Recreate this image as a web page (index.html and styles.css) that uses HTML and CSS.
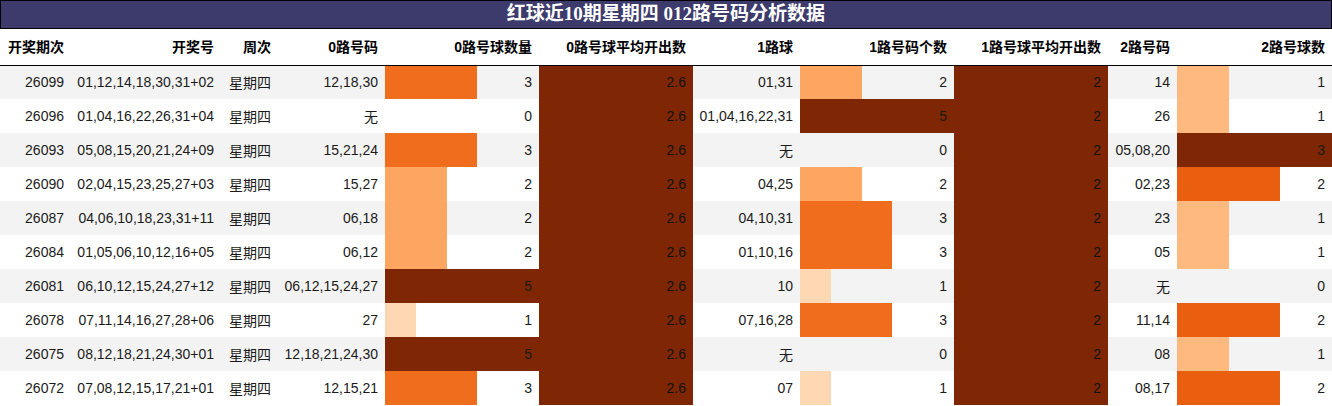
FILE: index.html
```html
<!DOCTYPE html>
<html lang="zh-CN">
<head>
<meta charset="utf-8">
<title>红球近10期星期四 012路号码分析数据</title>
<link rel="stylesheet" href="styles.css">
</head>
<body>
<div class="sheet">
  <div class="title">红球近10期星期四 012路号码分析数据</div>
  <table class="grid">
    <colgroup>
      <col class="c1"><col class="c2"><col class="c3"><col class="c4"><col class="c5"><col class="c6"><col class="c7"><col class="c8"><col class="c9"><col class="c10"><col class="c11">
    </colgroup>
    <thead>
      <tr>
        <th>开奖期次</th><th>开奖号</th><th>周次</th><th>0路号码</th><th>0路号球数量</th><th>0路号球平均开出数</th><th>1路球</th><th>1路号码个数</th><th>1路号球平均开出数</th><th>2路号码</th><th>2路号球数</th>
      </tr>
    </thead>
    <tbody>
      <tr>
        <td>26099</td><td>01,12,14,18,30,31+02</td><td>星期四</td><td>12,18,30</td>
        <td class="bar" style="--w:60%;--c:#f16d1e">3</td><td class="full">2.6</td>
        <td>01,31</td><td class="bar" style="--w:40%;--c:#fda662">2</td><td class="full">2</td>
        <td>14</td><td class="bar" style="--w:33.33%;--c:#fdb97e">1</td>
      </tr>
      <tr>
        <td>26096</td><td>01,04,16,22,26,31+04</td><td>星期四</td><td>无</td>
        <td class="bar" style="--w:0%;--c:transparent">0</td><td class="full">2.6</td>
        <td>01,04,16,22,31</td><td class="bar" style="--w:100%;--c:#7f2704">5</td><td class="full">2</td>
        <td>26</td><td class="bar" style="--w:33.33%;--c:#fdb97e">1</td>
      </tr>
      <tr>
        <td>26093</td><td>05,08,15,20,21,24+09</td><td>星期四</td><td>15,21,24</td>
        <td class="bar" style="--w:60%;--c:#f16d1e">3</td><td class="full">2.6</td>
        <td>无</td><td class="bar" style="--w:0%;--c:transparent">0</td><td class="full">2</td>
        <td>05,08,20</td><td class="bar" style="--w:100%;--c:#7f2704">3</td>
      </tr>
      <tr>
        <td>26090</td><td>02,04,15,23,25,27+03</td><td>星期四</td><td>15,27</td>
        <td class="bar" style="--w:40%;--c:#fda662">2</td><td class="full">2.6</td>
        <td>04,25</td><td class="bar" style="--w:40%;--c:#fda662">2</td><td class="full">2</td>
        <td>02,23</td><td class="bar" style="--w:66.67%;--c:#e95e0f">2</td>
      </tr>
      <tr>
        <td>26087</td><td>04,06,10,18,23,31+11</td><td>星期四</td><td>06,18</td>
        <td class="bar" style="--w:40%;--c:#fda662">2</td><td class="full">2.6</td>
        <td>04,10,31</td><td class="bar" style="--w:60%;--c:#f16d1e">3</td><td class="full">2</td>
        <td>23</td><td class="bar" style="--w:33.33%;--c:#fdb97e">1</td>
      </tr>
      <tr>
        <td>26084</td><td>01,05,06,10,12,16+05</td><td>星期四</td><td>06,12</td>
        <td class="bar" style="--w:40%;--c:#fda662">2</td><td class="full">2.6</td>
        <td>01,10,16</td><td class="bar" style="--w:60%;--c:#f16d1e">3</td><td class="full">2</td>
        <td>05</td><td class="bar" style="--w:33.33%;--c:#fdb97e">1</td>
      </tr>
      <tr>
        <td>26081</td><td>06,10,12,15,24,27+12</td><td>星期四</td><td>06,12,15,24,27</td>
        <td class="bar" style="--w:100%;--c:#7f2704">5</td><td class="full">2.6</td>
        <td>10</td><td class="bar" style="--w:20%;--c:#fdd8b3">1</td><td class="full">2</td>
        <td>无</td><td class="bar" style="--w:0%;--c:transparent">0</td>
      </tr>
      <tr>
        <td>26078</td><td>07,11,14,16,27,28+06</td><td>星期四</td><td>27</td>
        <td class="bar" style="--w:20%;--c:#fdd8b3">1</td><td class="full">2.6</td>
        <td>07,16,28</td><td class="bar" style="--w:60%;--c:#f16d1e">3</td><td class="full">2</td>
        <td>11,14</td><td class="bar" style="--w:66.67%;--c:#e95e0f">2</td>
      </tr>
      <tr>
        <td>26075</td><td>08,12,18,21,24,30+01</td><td>星期四</td><td>12,18,21,24,30</td>
        <td class="bar" style="--w:100%;--c:#7f2704">5</td><td class="full">2.6</td>
        <td>无</td><td class="bar" style="--w:0%;--c:transparent">0</td><td class="full">2</td>
        <td>08</td><td class="bar" style="--w:33.33%;--c:#fdb97e">1</td>
      </tr>
      <tr>
        <td>26072</td><td>07,08,12,15,17,21+01</td><td>星期四</td><td>12,15,21</td>
        <td class="bar" style="--w:60%;--c:#f16d1e">3</td><td class="full">2.6</td>
        <td>07</td><td class="bar" style="--w:20%;--c:#fdd8b3">1</td><td class="full">2</td>
        <td>08,17</td><td class="bar" style="--w:66.67%;--c:#e95e0f">2</td>
      </tr>
    </tbody>
  </table>
</div>
</body>
</html>
```

FILE: styles.css
```css
html, body {
  margin: 0;
  padding: 0;
  background: #ffffff;
}

.sheet {
  width: 1332px;
  font-family: "Liberation Sans", "Noto Sans CJK SC", sans-serif;
  color: #1a1a1a;
}

.title {
  box-sizing: border-box;
  height: 29px;
  border: 1px solid #000000;
  background: #3d3b6c;
  color: #ffffff;
  font-family: "Liberation Serif", "Noto Sans CJK SC", serif;
  font-weight: bold;
  font-size: 19px;
  line-height: 26px;
  text-align: center;
}

.grid {
  width: 1332px;
  border-collapse: collapse;
  border-spacing: 0;
  table-layout: fixed;
  font-size: 14px;
}

.c1 { width: 71px; }
.c2 { width: 150px; }
.c3 { width: 57px; }
.c4 { width: 107px; }
.c5 { width: 154px; }
.c6 { width: 154px; }
.c7 { width: 107px; }
.c8 { width: 154px; }
.c9 { width: 154px; }
.c10 { width: 69px; }
.c11 { width: 155px; }

.grid th,
.grid td {
  padding: 0 7px 0 0;
  text-align: right;
  white-space: nowrap;
  overflow: hidden;
}

.grid th {
  height: 36px;
  padding-bottom: 1px;
  font-weight: bold;
  color: #000000;
  border-bottom: 1px solid #000000;
  box-sizing: border-box;
  background: #ffffff;
}

.grid td {
  height: 34px;
  box-sizing: border-box;
}

.grid tbody tr:nth-child(odd) {
  background: #f3f3f3;
}

.grid tbody tr:nth-child(even) {
  background: #ffffff;
}

.grid td.bar {
  background-image: linear-gradient(to right, var(--c) 0, var(--c) var(--w), transparent var(--w), transparent 100%);
  background-repeat: no-repeat;
}

.grid td.full {
  background: #7f2704;
  color: #111111;
}
```
